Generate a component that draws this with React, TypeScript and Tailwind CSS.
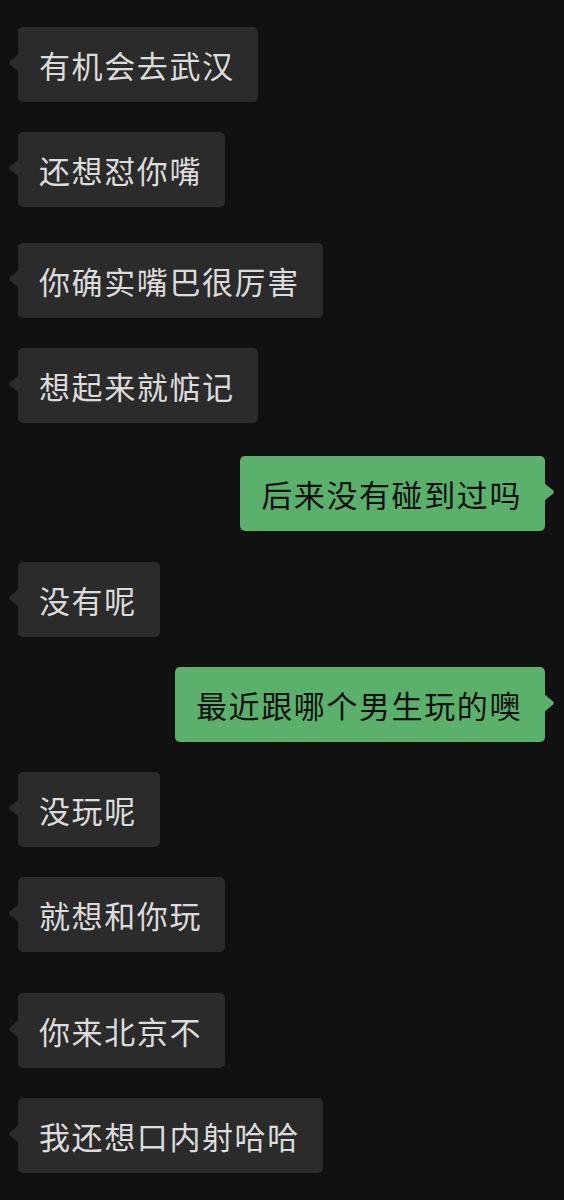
import React from 'react';

type Msg = { text: string; mine?: boolean; gap: number };

const messages: Msg[] = [
  { text: '有机会去武汉', gap: 27 },
  { text: '还想怼你嘴', gap: 30 },
  { text: '你确实嘴巴很厉害', gap: 36 },
  { text: '想起来就惦记', gap: 30 },
  { text: '后来没有碰到过吗', mine: true, gap: 33 },
  { text: '没有呢', gap: 31 },
  { text: '最近跟哪个男生玩的噢', mine: true, gap: 30 },
  { text: '没玩呢', gap: 30 },
  { text: '就想和你玩', gap: 30 },
  { text: '你来北京不', gap: 41 },
  { text: '我还想口内射哈哈', gap: 30 },
];

const Bubble: React.FC<{ msg: Msg }> = ({ msg }) => {
  const { text, mine } = msg;
  return (
    <div className={`flex ${mine ? 'justify-end pr-[19px]' : 'justify-start pl-[18px]'}`} style={{ marginTop: msg.gap }}>
      <div
        className={`relative h-[75px] flex items-center rounded-[5px] pl-[21px] pr-[23px] text-[31px] leading-none tracking-[1.6px] ${
          mine ? 'bg-[#5bb06b] text-[#111111]' : 'bg-[#2b2b2b] text-[#dcdcdc]'
        }`}
      >
        {mine ? (
          <svg className="absolute right-[-10px] top-[27px]" width="11" height="18" viewBox="0 0 11 18">
            <path d="M0 0 L9.2 7.6 Q10.6 9 9.2 10.4 L0 18 Z" fill="#5bb06b" />
          </svg>
        ) : (
          <svg className="absolute left-[-10px] top-[27px]" width="11" height="18" viewBox="0 0 11 18">
            <path d="M11 0 L1.8 7.6 Q0.4 9 1.8 10.4 L11 18 Z" fill="#2b2b2b" />
          </svg>
        )}
        <span>{text}</span>
      </div>
    </div>
  );
};

const App: React.FC = () => {
  return (
    <div
      className="flex flex-col w-full min-h-screen bg-[#111111]"
      style={{ fontFamily: '"Noto Sans CJK SC", "Noto Sans", sans-serif' }}
    >
      {messages.map((m, i) => (
        <Bubble key={i} msg={m} />
      ))}
    </div>
  );
};

export default App;
